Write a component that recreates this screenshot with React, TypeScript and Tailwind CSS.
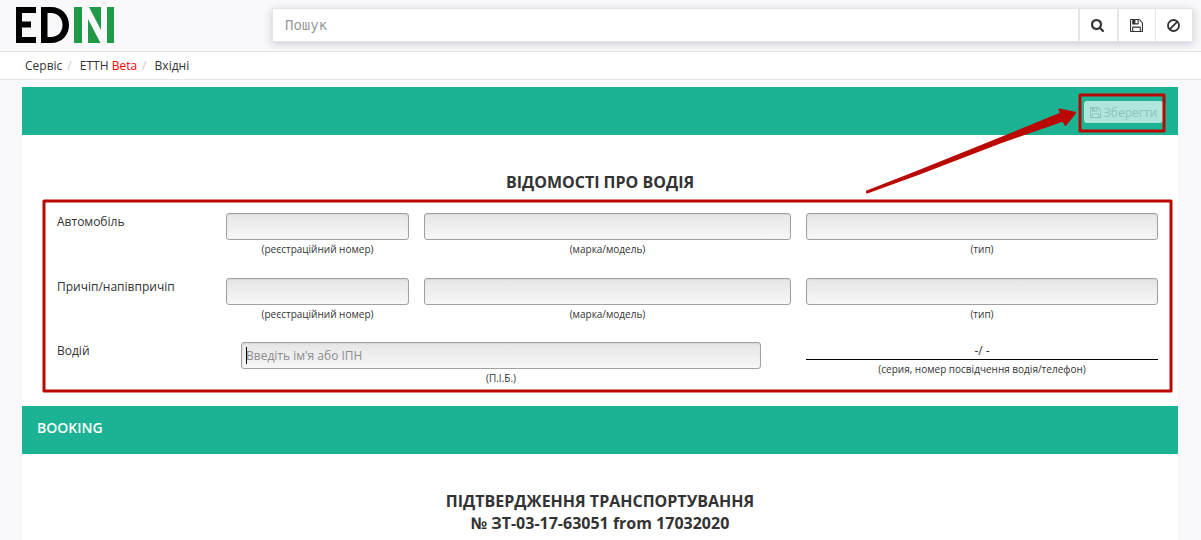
import type { ReactNode } from "react";

function SaveIcon({ className }: { className: string }) {
  return (
    <svg viewBox="0 0 1536 1536" className={className} fill="currentColor">
      <path d="M384 1408h768v-384h-768v384zm896 0h128v-896q0-14-10-38.500t-20-34.500l-281-281q-10-10-34-20t-39-10v416q0 40-28 68t-68 28h-576q-40 0-68-28t-28-68v-416h-128v1280h128v-416q0-40 28-68t68-28h832q40 0 68 28t28 68v416zm-384-928v-320q0-13-9.500-22.500t-22.500-9.500h-192q-13 0-22.500 9.500t-9.500 22.500v320q0 13 9.500 22.500t22.500 9.500h192q13 0 22.500-9.500t9.500-22.500zm640 32v928q0 40-28 68t-68 28h-1344q-40 0-68-28t-28-68v-1344q0-40 28-68t68-28h928q40 0 88 20t76 48l280 280q28 28 48 76t20 88z" />
    </svg>
  );
}

function SearchIcon() {
  return (
    <svg viewBox="0 0 1664 1664" className="size-[13px]" fill="currentColor" stroke="currentColor" strokeWidth="30">
      <path d="M1152 704q0-185-131.500-316.500t-316.500-131.500-316.500 131.500-131.500 316.500 131.500 316.500 316.500 131.500 316.500-131.500 131.500-316.500zm512 832q0 52-38 90t-90 38q-54 0-90-38l-343-342q-179 124-399 124-143 0-273.500-55.500t-225-150-150-225-55.500-273.500 55.500-273.500 150-225 225-150 273.500-55.500 273.500 55.500 225 150 150 225 55.500 273.500q0 220-124 399l343 343q37 37 37 90z" />
    </svg>
  );
}

function BanIcon() {
  return (
    <svg viewBox="0 0 12 12" className="size-[13px]" fill="none" stroke="currentColor" strokeWidth="1.700">
      <circle cx="6" cy="6" r="5.100" />
      <path d="M2.500 9.500L9.500 2.500" />
    </svg>
  );
}

function Logo() {
  return (
    <svg viewBox="0 0 98 36" className="mt-[7px] ml-4 h-9 w-[98px]">
      <path d="M0 0H20V6H6V14.500H15V20.500H6V30H20V36H0Z" fill="#000" />
      <path fillRule="evenodd" d="M25 0H35C46 0 53 8 53 18S46 36 35 36H25ZM31.500 6V30H35C42 30 46.500 25 46.500 18S42 6 35 6Z" fill="#000" />
      <path d="M58 0H66V36H58ZM91 0H98V36H91ZM73 0H85V23ZM72 12L84.500 36H72Z" fill="#219a47" />
    </svg>
  );
}

function Box({ children }: { children?: ReactNode }) {
  return (
    <div className="flex h-[27px] items-center rounded-[3px] border border-[#a0a0a0] bg-linear-to-b from-[#e6e6e6] to-[#f7f7f7] pl-1 shadow-[inset_0_1px_1px_#d8d8d8]">
      {children}
    </div>
  );
}

function Field({ caption, className, children }: { caption: string; className: string; children?: ReactNode }) {
  return (
    <div className={className}>
      <Box>{children}</Box>
      <div className="mt-0.5 text-center text-[10px] leading-[14px]">{caption}</div>
    </div>
  );
}

function VehicleRow({ label }: { label: string }) {
  return (
    <div className="flex h-[65px] pl-[35px]">
      <div className="w-[169px] pt-px leading-4">{label}</div>
      <Field className="w-[183px]" caption="(реєстраційний номер)" />
      <Field className="ml-[15px] w-[367px]" caption="(марка/модель)" />
      <Field className="ml-[15px] w-[352px]" caption="(тип)" />
    </div>
  );
}

export default function App() {
  return (
    <div className="relative h-[540px] w-[1201px] overflow-hidden bg-[#f9f9fb] font-['Open_Sans',sans-serif] text-[12px] text-[#333]">
      <header className="flex h-[52px] border-b border-[#e4e5e7]">
        <Logo />
        <div className="mt-2 ml-[158px] flex h-[34px] w-[921px] border border-[#e4e5e7] bg-white shadow-[0_2px_8px_rgba(60,60,110,0.25)]">
          <div className="flex-1 pl-3 font-['DejaVu_Sans_Mono',monospace] text-[14px] leading-8 text-[#999]">Пошук</div>
          <div className="flex w-[39px] items-center justify-center border-l-2 border-[#e4e5e7] pr-0.5"><SearchIcon /></div>
          <div className="flex w-[38px] items-center justify-center border-l-2 border-[#e4e5e7] pr-px"><SaveIcon className="size-[13px]" /></div>
          <div className="flex w-[37px] items-center justify-center border-l border-[#e4e5e7] pr-px"><BanIcon /></div>
        </div>
      </header>
      <nav className="flex h-7 border-b border-[#e4e5e7] bg-white pl-[25px] leading-[27px]">
        <span>Сервіс</span>
        <span className="w-[17.5px] pl-[5px] text-[#ccc]">/</span>
        <span>ЕТТН <span className="text-[#f00]">Beta</span></span>
        <span className="w-[17.5px] pl-[5px] text-[#ccc]">/</span>
        <span>Вхідні</span>
      </nav>
      <main className="mt-[7px] ml-[22px] h-[453px] w-[1156px] bg-white">
        <div className="flex h-12 justify-end bg-[#1bb394] pt-3.5 pr-[15px]">
          <div className="flex h-[22px] w-[79px] items-center justify-center gap-[3px] rounded-[3px] bg-[#afe5da] pt-px text-[#8cc4b9]">
            <SaveIcon className="size-[11px]" />Зберегти
          </div>
        </div>
        <h1 className="h-[78px] pt-9 text-center text-[16px] leading-[22px] font-bold">ВІДОМОСТІ ПРО ВОДІЯ</h1>
        <VehicleRow label="Автомобіль" />
        <VehicleRow label="Причіп/напівпричіп" />
        <div className="flex h-[63px] pl-[35px]">
          <div className="w-[184px] leading-4">Водій</div>
          <Field className="-mt-px w-[520px]" caption="(П.І.Б.)">
            <span className="h-[17px] w-px bg-black" />
            <span className="-ml-px text-[#8c8c8c]">Введіть ім'я або ІПН</span>
          </Field>
          <div className="ml-[45px] w-[352px] text-center">
            <div className="h-[17px] border-b border-black leading-4">-/ -</div>
            <div className="mt-0.5 text-[10px] leading-[14px]">(серия, номер посвідчення водія/телефон)</div>
          </div>
        </div>
        <div className="h-12 bg-[#1bb394] pl-[15px] text-[14px] leading-[44px] font-semibold text-white">BOOKING</div>
        <h2 className="pt-9 text-center text-[16px] leading-[22px] font-bold">
          ПІДТВЕРДЖЕННЯ ТРАНСПОРТУВАННЯ<br />№ ЗТ-03-17-63051 from 17032020
        </h2>
      </main>
      <svg viewBox="0 0 1201 540" className="pointer-events-none absolute inset-0 h-[540px] w-[1201px]" fill="none" stroke="#b90902" strokeWidth="3" strokeLinejoin="round">
        <rect x="44" y="201" width="1127" height="190" />
        <rect x="1080" y="95" width="84" height="36" />
        <path d="M867 191.500L918 171.500L1000 138.500L1061 113.500L1059.500 109.500L1075 112.800L1065.500 125L1063 120.500L1000 142.500L918 174L867 192.500Z" fill="#b90902" strokeWidth="2" />
      </svg>
    </div>
  );
}
